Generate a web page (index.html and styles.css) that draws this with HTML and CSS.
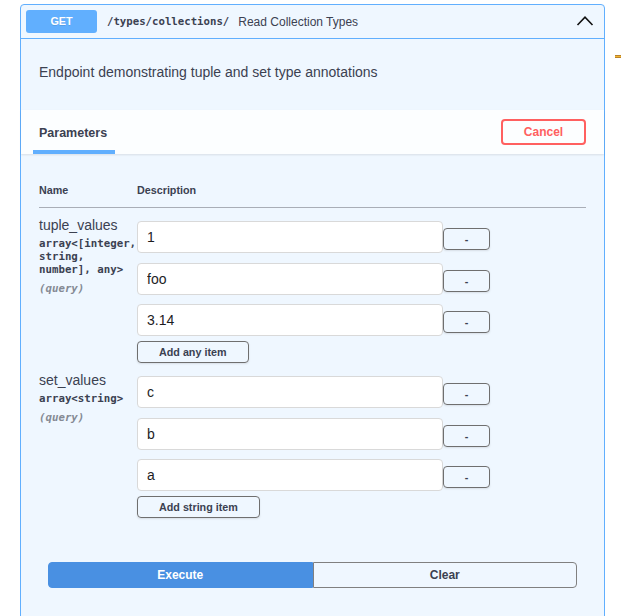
FILE: index.html
```html
<!DOCTYPE html>
<html>
<head>
<meta charset="utf-8">
<link rel="stylesheet" href="styles.css">
</head>
<body>
<div class="page">
  <div class="opblock">
    <div class="summary">
      <span class="method">GET</span>
      <span class="path">/types/collections/</span>
      <span class="summary-desc">Read Collection Types</span>
      <svg class="chevron" width="20" height="20" viewBox="0 0 20 20"><path d="M2.5 13 L10 5.2 L17.5 13" fill="none" stroke="#111" stroke-width="1.6"/></svg>
    </div>
    <div class="desc">Endpoint demonstrating tuple and set type annotations</div>
    <div class="section-header">
      <div class="tab">Parameters</div>
      <button class="cancel">Cancel</button>
    </div>
    <div class="params">
      <div class="params-head">
        <div class="col-name">Name</div>
        <div class="col-desc">Description</div>
      </div>
      <div class="param-row">
        <div class="param-name">
          <div class="pname">tuple_values</div>
          <div class="ptype">array&lt;[integer,<br>string,<br>number], any&gt;</div>
          <div class="pin">(query)</div>
        </div>
        <div class="param-desc">
          <div class="item"><input class="text-input" value="1"><button class="remove">-</button></div>
          <div class="item"><input class="text-input" value="foo"><button class="remove">-</button></div>
          <div class="item last"><input class="text-input" value="3.14"><button class="remove">-</button></div>
          <button class="add">Add any item</button>
        </div>
      </div>
      <div class="param-row">
        <div class="param-name">
          <div class="pname">set_values</div>
          <div class="ptype">array&lt;string&gt;</div>
          <div class="pin">(query)</div>
        </div>
        <div class="param-desc">
          <div class="item"><input class="text-input" value="c"><button class="remove">-</button></div>
          <div class="item"><input class="text-input" value="b"><button class="remove">-</button></div>
          <div class="item last"><input class="text-input" value="a"><button class="remove">-</button></div>
          <button class="add">Add string item</button>
        </div>
      </div>
    </div>
    <div class="execute-wrapper">
      <button class="execute">Execute</button><button class="clear">Clear</button>
    </div>
  </div>
</div>
<div class="marker"></div>
</body>
</html>
```

FILE: styles.css
```css
html, body {
  margin: 0;
  padding: 0;
  background: #fff;
  font-family: "Liberation Sans", Arial, sans-serif;
  color: #3b4151;
  overflow: hidden;
}

.page {
  padding: 4px 0 0 20px;
}

.opblock {
  width: 585px;
  box-sizing: border-box;
  border: 1px solid #61affe;
  border-radius: 4px;
  background: #eff7ff;
  padding-bottom: 40px;
}

.summary {
  display: flex;
  align-items: center;
  padding: 5px;
  border-bottom: 1px solid #61affe;
}

.method {
  width: 71px;
  height: 23px;
  line-height: 23px;
  text-align: center;
  background: #61affe;
  color: #fff;
  font-weight: 700;
  font-size: 10.75px;
  border-radius: 3px;
  text-shadow: 0 1px 0 rgba(0, 0, 0, .1);
}

.path {
  font-family: "DejaVu Sans Mono", monospace;
  font-weight: 700;
  font-size: 10.7px;
  padding: 0 9px 0 10px;
  color: #3b4151;
}

.summary-desc {
  font-size: 12px;
  color: #3b4151;
}

.chevron {
  margin-left: auto;
  margin-right: 4px;
}

.desc {
  padding: 25px 18px 29px;
  font-size: 14px;
  line-height: 17px;
  color: #3b4151;
}

.section-header {
  display: flex;
  align-items: center;
  justify-content: space-between;
  padding: 0 18px 0 12px;
  background: rgba(255, 255, 255, .8);
  box-shadow: 0 1px 2px rgba(0, 0, 0, .1);
}

.tab {
  width: 82px;
  box-sizing: border-box;
  padding: 16px 0 9px 6px;
  line-height: 15px;
  font-size: 12.5px;
  font-weight: 700;
  border-bottom: 4px solid #61affe;
}

.cancel {
  width: 85px;
  height: 26px;
  box-sizing: border-box;
  border: 2px solid #ff6060;
  border-radius: 4px;
  background: transparent;
  color: #ff6060;
  font-family: "Liberation Sans", Arial, sans-serif;
  font-weight: 700;
  font-size: 12px;
  padding: 0;
}

.params {
  padding: 30px 18px 0;
}

.params-head {
  display: flex;
  font-size: 10.75px;
  font-weight: 700;
  line-height: 13px;
  padding-bottom: 10px;
  border-bottom: 1px solid #a9aeb7;
}

.col-name, .param-name {
  width: 98px;
  flex: none;
}

.param-row {
  display: flex;
  padding-top: 9px;
}

.pname {
  font-size: 14px;
  line-height: 16px;
}

.ptype {
  font-family: "DejaVu Sans Mono", monospace;
  font-weight: 700;
  font-size: 10.75px;
  line-height: 13px;
  margin-top: 4px;
  white-space: nowrap;
}

.pin {
  font-family: "DejaVu Sans Mono", monospace;
  font-style: italic;
  font-weight: 700;
  font-size: 10.75px;
  line-height: 13px;
  margin-top: 6px;
  color: #858a94;
}

.param-desc {
  padding-top: 4px;
}

.item {
  display: flex;
  align-items: flex-start;
  margin-bottom: 9.5px;
}

.item.last {
  margin-bottom: 5px;
}

.text-input {
  width: 306px;
  height: 32px;
  box-sizing: border-box;
  border: 1px solid #d9d9d9;
  border-radius: 4px;
  background: #fff;
  padding: 0 9px;
  font-family: "Liberation Sans", Arial, sans-serif;
  font-size: 14px;
  color: #1d1d1f;
  outline: none;
}

.remove {
  width: 47px;
  height: 22px;
  margin-top: 7px;
  box-sizing: border-box;
  border: 1px solid #6f6f6f;
  border-radius: 4px;
  background: transparent;
  box-shadow: 0 1px 2px rgba(0, 0, 0, .1);
  font-family: "Liberation Sans", Arial, sans-serif;
  font-weight: 700;
  font-size: 10.75px;
  color: #3b4151;
  padding: 0;
}

.add {
  display: block;
  height: 22px;
  box-sizing: border-box;
  padding: 0 21px;
  border: 1px solid #6f6f6f;
  border-radius: 4px;
  background: transparent;
  box-shadow: 0 1px 2px rgba(0, 0, 0, .1);
  font-family: "Liberation Sans", Arial, sans-serif;
  font-weight: 700;
  font-size: 10.75px;
  color: #3b4151;
}

.execute-wrapper {
  display: flex;
  padding: 0 27px;
  margin-top: 44px;
}

.execute, .clear {
  flex: 1;
  height: 26px;
  box-sizing: border-box;
  font-family: "Liberation Sans", Arial, sans-serif;
  font-weight: 700;
  font-size: 12px;
  padding: 0;
}

.execute {
  background: #4990e2;
  border: 1px solid #4990e2;
  color: #fff;
  border-radius: 4px 0 0 4px;
}

.clear {
  background: transparent;
  border: 1px solid #808080;
  color: #3b4151;
  border-radius: 0 4px 4px 0;
}

.marker {
  position: absolute;
  left: 615px;
  top: 55px;
  width: 6px;
  height: 1px;
  background: #f2b632;
  border-top: 1px solid #b9822a;
  border-bottom: 1px solid #b9822a;
}
```
